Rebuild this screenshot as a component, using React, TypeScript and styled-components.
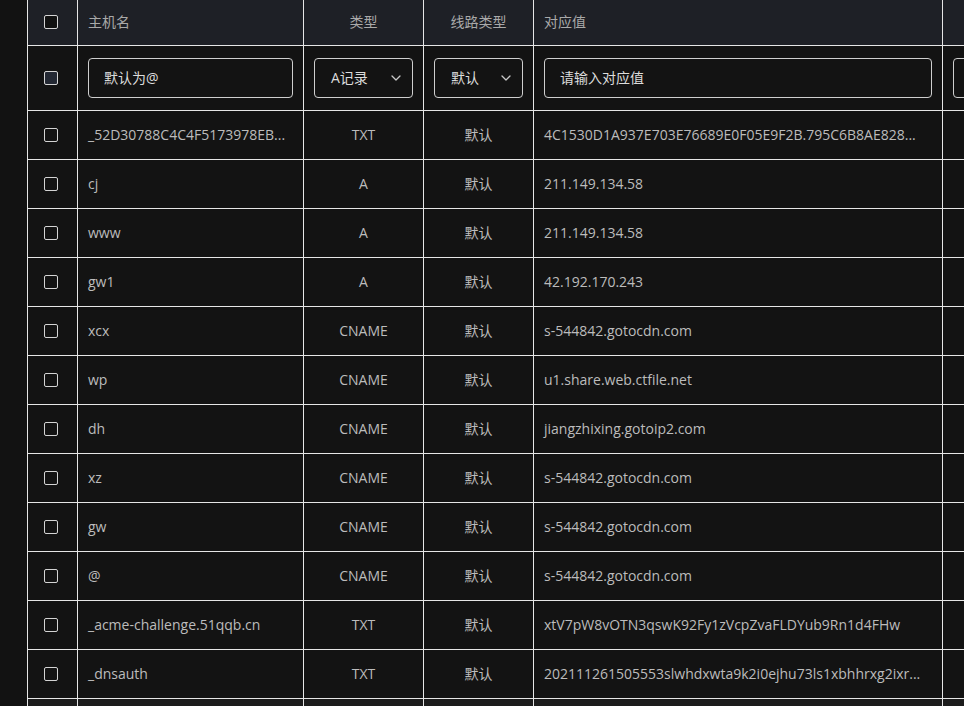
import React from "react";
import styled, { createGlobalStyle } from "styled-components";

interface DnsRecord {
    host: string;
    type: string;
    line: string;
    value: string;
}

const records: DnsRecord[] = [
    { host: "_52D30788C4C4F5173978EB...", type: "TXT", line: "默认", value: "4C1530D1A937E703E76689E0F05E9F2B.795C6B8AE828..." },
    { host: "cj", type: "A", line: "默认", value: "211.149.134.58" },
    { host: "www", type: "A", line: "默认", value: "211.149.134.58" },
    { host: "gw1", type: "A", line: "默认", value: "42.192.170.243" },
    { host: "xcx", type: "CNAME", line: "默认", value: "s-544842.gotocdn.com" },
    { host: "wp", type: "CNAME", line: "默认", value: "u1.share.web.ctfile.net" },
    { host: "dh", type: "CNAME", line: "默认", value: "jiangzhixing.gotoip2.com" },
    { host: "xz", type: "CNAME", line: "默认", value: "s-544842.gotocdn.com" },
    { host: "gw", type: "CNAME", line: "默认", value: "s-544842.gotocdn.com" },
    { host: "@", type: "CNAME", line: "默认", value: "s-544842.gotocdn.com" },
    { host: "_acme-challenge.51qqb.cn", type: "TXT", line: "默认", value: "xtV7pW8vOTN3qswK92Fy1zVcpZvaFLDYub9Rn1d4FHw" },
    { host: "_dnsauth", type: "TXT", line: "默认", value: "202111261505553slwhdxwta9k2i0ejhu73ls1xbhhrxg2ixr..." },
];

const GlobalStyle = createGlobalStyle`
    html, body {
        margin: 0;
        padding: 0;
        background: #121212;
        overflow: hidden;
        font-family: "Open Sans", "Noto Sans CJK SC", sans-serif;
        font-size: 14px;
    }
`;

const Chevron = () => (
    <svg width="12" height="8" viewBox="0 0 12 8" fill="none">
        <path d="M2 2l4 4 4-4" stroke="#c8c8c8" strokeWidth="1.3" strokeLinecap="round" strokeLinejoin="round" />
    </svg>
);

export default function App() {
    return (
        <>
            <GlobalStyle />
            <Page>
                <Table>
                    <colgroup>
                        <col style={{ width: 50 }} />
                        <col style={{ width: 226 }} />
                        <col style={{ width: 120 }} />
                        <col style={{ width: 110 }} />
                        <col style={{ width: 409 }} />
                        <col style={{ width: 160 }} />
                    </colgroup>
                    <thead>
                        <HeadRow>
                            <HeadCell $center>
                                <Checkbox $fill="#111111" />
                            </HeadCell>
                            <HeadCell>主机名</HeadCell>
                            <HeadCell $center>类型</HeadCell>
                            <HeadCell $center>线路类型</HeadCell>
                            <HeadCell>对应值</HeadCell>
                            <HeadCell />
                        </HeadRow>
                    </thead>
                    <tbody>
                        <FilterRow>
                            <Cell $center>
                                <Checkbox $fill="#232833" />
                            </Cell>
                            <Cell>
                                <TextBox>默认为@</TextBox>
                            </Cell>
                            <Cell>
                                <SelectBox>
                                    <span>A记录</span>
                                    <Chevron />
                                </SelectBox>
                            </Cell>
                            <Cell>
                                <SelectBox>
                                    <span>默认</span>
                                    <Chevron />
                                </SelectBox>
                            </Cell>
                            <Cell>
                                <TextBox>请输入对应值</TextBox>
                            </Cell>
                            <Cell>
                                <TextBox />
                            </Cell>
                        </FilterRow>
                        {records.map((r, i) => (
                            <DataRow key={i}>
                                <Cell $center>
                                    <Checkbox />
                                </Cell>
                                <Cell>{r.host}</Cell>
                                <Cell $center>{r.type}</Cell>
                                <Cell $center>{r.line}</Cell>
                                <Cell>{r.value}</Cell>
                                <Cell />
                            </DataRow>
                        ))}
                        <DataRow $muted>
                            <Cell />
                            <Cell />
                            <Cell />
                            <Cell />
                            <Cell />
                            <Cell />
                        </DataRow>
                    </tbody>
                </Table>
            </Page>
        </>
    );
}

const Page = styled.div`
    padding-left: 27px;
    width: 1200px;
    height: 706px;
    overflow: hidden;
`;

const Table = styled.table`
    border-collapse: collapse;
    table-layout: fixed;
    width: 1075px;
    background: #131313;
`;

const HeadRow = styled.tr`
    height: 45px;
    background: #1e2026;
`;

const HeadCell = styled.th<{ $center?: boolean }>`
    border: 1px solid #e6e6e6;
    border-top: none;
    padding: 0 10px;
    font-weight: 400;
    color: #a9a9a9;
    text-align: ${(p) => (p.$center ? "center" : "left")};
    vertical-align: middle;
    line-height: 1;
`;

const FilterRow = styled.tr`
    height: 65px;
`;

const DataRow = styled.tr<{ $muted?: boolean }>`
    height: 49px;
    background: ${(p) => (p.$muted ? "#1c1c1c" : "#131313")};
`;

const Cell = styled.td<{ $center?: boolean }>`
    border: 1px solid #e6e6e6;
    padding: 0 10px;
    color: #bcbcbc;
    text-align: ${(p) => (p.$center ? "center" : "left")};
    vertical-align: middle;
    white-space: nowrap;
    overflow: hidden;
    line-height: 1;
`;

const Checkbox = styled.span<{ $fill?: string }>`
    display: block;
    margin: 0 auto 0 6px;
    width: 12px;
    height: 12px;
    border: 1px solid #d4d4d4;
    border-radius: 2px;
    background: ${(p) => p.$fill ?? "transparent"};
`;

const TextBox = styled.div`
    box-sizing: border-box;
    height: 40px;
    border: 1px solid #cfcfcf;
    border-radius: 4px;
    padding: 0 15px;
    display: flex;
    align-items: center;
    color: #dcdcdc;
    background: #131313;
`;

const SelectBox = styled(TextBox)`
    justify-content: space-between;
    padding: 0 10px 0 16px;
`;
